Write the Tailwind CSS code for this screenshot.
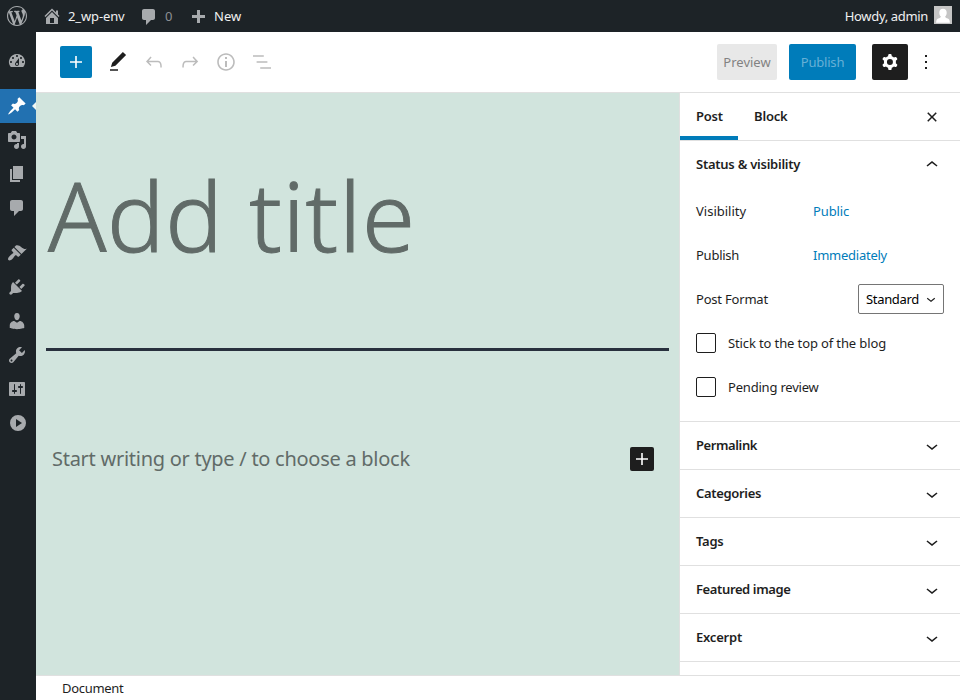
<!DOCTYPE html>
<html lang="en">
<head>
<meta charset="utf-8">
<title>Add New Post</title>
<script src="https://cdn.jsdelivr.net/npm/@tailwindcss/browser@4"></script>
</head>
<body class="w-[960px] h-[700px] overflow-hidden flex flex-col bg-white font-['Noto_Sans','Open_Sans',sans-serif] text-[13px] leading-5 text-[#1e1e1e]">

<!-- Admin bar -->
<header class="h-8 shrink-0 flex items-center bg-[#1d2327] text-[#f0f0f1] pl-[7px] pr-2">
  <svg class="size-5 fill-[#a7aaad]" viewBox="0 0 20 20"><path d="M20 10c0-5.51-4.49-10-10-10C4.48 0 0 4.49 0 10c0 5.52 4.48 10 10 10 5.51 0 10-4.48 10-10zM7.78 15.37L4.37 6.22c.55-.02 1.17-.08 1.17-.08.5-.06.44-1.13-.06-1.11 0 0-1.45.11-2.37.11-.18 0-.37 0-.58-.01C4.12 2.69 6.87 1.11 10 1.11c2.33 0 4.45.87 6.05 2.34-.68-.11-1.65.39-1.65 1.58 0 .74.45 1.36.9 2.1.35.61.55 1.36.55 2.46 0 1.49-1.4 5-1.4 5l-3.03-8.37c.54-.02.82-.17.82-.17.5-.05.44-1.25-.06-1.22 0 0-1.44.12-2.38.12-.87 0-2.33-.12-2.33-.12-.5-.03-.56 1.2-.06 1.22l.92.08 1.26 3.41zM17.41 10c.24-.64.74-1.87.43-4.25.7 1.29 1.05 2.71 1.05 4.25 0 3.29-1.73 6.24-4.4 7.78.97-2.59 1.94-5.2 2.92-7.78zM6.1 18.09C3.12 16.65 1.11 13.53 1.11 10c0-1.3.23-2.48.72-3.59C3.25 10.3 4.67 14.2 6.1 18.09zm4.03-6.63l2.58 6.98c-.86.29-1.76.45-2.71.45-.79 0-1.57-.11-2.29-.33.81-2.38 1.62-4.74 2.42-7.1z"/></svg>
  <svg class="size-5 ml-[15px] fill-[#a7aaad]" viewBox="0 0 20 20"><path d="M16 8.5l1.53 1.53-1.06 1.06L10 4.6l-6.47 6.49-1.06-1.06L10 2.5l4 4v-2h2v4zm-6-2.46l6 5.99V18H4v-5.97zM12 17v-5H8v5h4z"/></svg>
  <span class="ml-1.5 w-[71px] tracking-[-0.13px]">2_wp-env</span>
  <svg class="size-5 mt-0.5 fill-[#a7aaad]" viewBox="0 0 20 20"><path d="M5 2h9c1.1 0 2 .9 2 2v7c0 1.1-.9 2-2 2h-2l-5 5v-5H5c-1.1 0-2-.9-2-2V4c0-1.1.9-2 2-2z"/></svg>
  <span class="ml-[6px] w-[22px] text-[#8c8f94]">0</span>
  <svg class="size-5 mt-[3px] ml-px fill-[#a7aaad]" viewBox="0 0 20 20"><path d="M17 7v3h-5v5H9v-5H4V7h5V2h3v5h5z"/></svg>
  <span class="ml-[6px]">New</span>
  <span class="ml-auto tracking-[-0.34px]">Howdy, admin</span>
  <svg class="ml-1.5 w-[18px] h-[18px] -mt-0.5" viewBox="0 0 18 18"><path fill="#c5c5c5" d="M0 0h18v18H0z"/><path fill="#fff" d="M9 2.8c2.3 0 3.7 1.5 3.7 3.9 0 1.9-.7 3.1-1.6 3.9.2 1.2 1.300 1.500 2.700 2 1.300.5 1.900 1.300 2.100 4.200H2.100c.2-2.900.8-3.700 2.100-4.200 1.400-.5 2.500-.8 2.700-2-.9-.8-1.600-2-1.600-3.900C5.300 4.300 6.700 2.800 9 2.800z"/></svg>
</header>

<div class="flex flex-1 min-h-0">
  <!-- Admin menu -->
  <nav class="w-9 shrink-0 bg-[#1d2327] pt-3 flex flex-col fill-[#a7aaad]">
    <a class="h-[34px] mb-[11px] flex items-center pl-[7px]"><svg class="size-5" viewBox="0 0 20 20"><path fill-rule="evenodd" d="M3.760 16h12.480A7.998 7.998 0 0 0 10 3a7.998 7.998 0 0 0-6.240 13zM10 4c.55 0 1 .45 1 1s-.45 1-1 1-1-.45-1-1 .45-1 1-1zM6 6c.55 0 1 .45 1 1s-.45 1-1 1-1-.45-1-1 .45-1 1-1zm8 0c.55 0 1 .45 1 1s-.45 1-1 1-1-.45-1-1 .45-1 1-1zm-5.370 5.550L12 7v6c0 1.100-.9 2-2 2s-2-.9-2-2c0-.57.24-1.080.63-1.450zM4 10c.55 0 1 .45 1 1s-.45 1-1 1-1-.45-1-1 .45-1 1-1zm12 0c.55 0 1 .45 1 1s-.45 1-1 1-1-.45-1-1 .45-1 1-1zm-5 3c0-.55-.45-1-1-1s-1 .45-1 1 .45 1 1 1 1-.45 1-1z"/></svg></a>
    <a class="h-[34px] flex items-center pl-[7px] bg-[#2271b1] fill-white relative"><svg class="size-5" viewBox="0 0 20 20"><path d="M10.440 3.020l1.820-1.820 6.360 6.350-1.830 1.820c-1.050-.68-2.480-.57-3.410.36l-.75.75c-.92.93-1.040 2.350-.35 3.410l-1.830 1.820-2.410-2.410-2.800 2.790c-.42.42-3.380 2.710-3.800 2.290s1.860-3.390 2.280-3.810l2.790-2.790L4.100 9.360l1.830-1.820c1.050.69 2.480.57 3.400-.36l.75-.75c.93-.92 1.050-2.350.36-3.410z"/></svg>
      <svg class="absolute right-0 top-[13px] w-1 h-2 fill-[#f0f6f3]" viewBox="0 0 4 8"><path d="M4 0v8L0 4z"/></svg></a>
    <a class="h-[34px] flex items-center pl-[7px]"><svg class="size-5" viewBox="0 0 20 20"><path d="M13 11V4c0-.55-.45-1-1-1h-1.670L9 1H5L3.670 3H2c-.55 0-1 .45-1 1v7c0 .55.45 1 1 1h10c.55 0 1-.45 1-1zM7 4.500c1.380 0 2.500 1.120 2.500 2.500S8.380 9.500 7 9.500 4.500 8.380 4.500 7 5.620 4.500 7 4.500zM14 6h5v10.500c0 1.380-1.120 2.500-2.500 2.500S14 17.880 14 16.500s1.120-2.500 2.500-2.500c.17 0 .34.02.5.05V9h-3V6zm-4 8.050V13h2v3.500c0 1.380-1.120 2.500-2.500 2.500S7 17.880 7 16.500 8.120 14 9.500 14c.17 0 .34.02.5.05z"/></svg></a>
    <a class="h-[34px] flex items-center pl-[7px]"><svg class="size-5" viewBox="0 0 20 20"><path d="M6 15V2h10v13H6zm-1 1h8v2H3V5h2v11z"/></svg></a>
    <a class="h-[34px] mb-[11px] flex items-center pl-[7px]"><svg class="size-5" viewBox="0 0 20 20"><path d="M5 2h9c1.100 0 2 .9 2 2v7c0 1.100-.9 2-2 2h-2l-5 5v-5H5c-1.100 0-2-.9-2-2V4c0-1.100.9-2 2-2z"/></svg></a>
    <a class="h-[34px] flex items-center pl-[7px]"><svg class="size-5" viewBox="0 0 20 20"><path d="M14.480 11.060L7.410 3.990l1.500-1.500c.5-.56 2.300-.47 3.510.32 1.210.8 1.430 1.280 2.910 2.100 1.180.64 2.450 1.260 4.450.85zm-.71.71L6.700 4.700 4.930 6.470c-.39.39-.39 1.020 0 1.410l1.060 1.060c.39.39.39 1.030 0 1.420-.6.6-1.430 1.110-2.210 1.690-.35.26-.7.53-1.010.84C1.430 14.230.4 16.080 1.400 17.070c.99 1 2.840-.03 4.180-1.360.31-.31.58-.66.85-1.020.57-.78 1.080-1.610 1.690-2.210.39-.39 1.020-.39 1.410 0l1.060 1.060c.39.39 1.020.39 1.410 0z"/></svg></a>
    <a class="h-[34px] flex items-center pl-[7px]"><svg class="size-5" viewBox="0 0 20 20"><path d="M13.110 4.360L9.870 7.600 8 5.730l3.240-3.240c.35-.34 1.050-.2 1.560.32.52.51.66 1.210.31 1.550zm-8 1.770l.91-1.120 9.010 9.010-1.190.84c-.71.71-2.630 1.160-3.820 1.160H6.140L4.900 17.260c-.59.59-1.540.59-2.120 0-.59-.58-.59-1.530 0-2.120l1.240-1.240v-3.880c0-1.130.4-3.190 1.090-3.890zm7.260 3.970l3.240-3.240c.34-.35 1.040-.21 1.550.31.52.51.66 1.210.31 1.550l-3.240 3.250z"/></svg></a>
    <a class="h-[34px] flex items-center pl-[7px]"><svg class="size-5" viewBox="0 0 20 20"><path d="M10 9.250c-2.270 0-2.730-3.440-2.730-3.440C7 4.020 7.820 2 9.970 2c2.160 0 2.980 2.020 2.710 3.810 0 0-.41 3.440-2.680 3.440zm0 2.570L12.720 10c2.390 0 4.520 2.330 4.520 4.530v2.490s-3.650 1.130-7.240 1.130c-3.650 0-7.240-1.130-7.240-1.130v-2.490c0-2.250 1.940-4.480 4.470-4.480z"/></svg></a>
    <a class="h-[34px] flex items-center pl-[7px]"><svg class="size-5" viewBox="0 0 20 20"><path d="M16.680 9.770c-1.340 1.340-3.300 1.670-4.950.99l-5.410 6.520c-.99.99-2.590.99-3.580 0s-.99-2.590 0-3.570l6.520-5.420c-.68-1.650-.35-3.610.99-4.950 1.280-1.280 3.120-1.620 4.720-1.060l-2.890 2.890 2.820 2.820 2.860-2.870c.53 1.580.18 3.390-1.080 4.650zM3.810 16.210c.4.39 1.040.39 1.430 0 .4-.4.4-1.040 0-1.430-.39-.4-1.030-.4-1.430 0-.39.39-.39 1.030 0 1.430z"/></svg></a>
    <a class="h-[34px] flex items-center pl-[7px]"><svg class="size-5" viewBox="0 0 20 20"><path d="M18 16V4c0-.55-.45-1-1-1H3c-.55 0-1 .45-1 1v12c0 .55.45 1 1 1h14c.55 0 1-.45 1-1zM8 11h1c.55 0 1 .45 1 1s-.45 1-1 1H8v1.500c0 .28-.22.5-.5.5s-.5-.22-.5-.5V13H6c-.55 0-1-.45-1-1s.45-1 1-1h1V5.500c0-.28.22-.5.5-.5s.5.22.5.5V11zm5-2h-1c-.55 0-1-.45-1-1s.45-1 1-1h1V5.500c0-.28.22-.5.5-.5s.5.22.5.5V7h1c.55 0 1 .45 1 1s-.45 1-1 1h-1v5.500c0 .28-.22.5-.5.5s-.5-.22-.5-.5V9z"/></svg></a>
    <a class="h-[34px] flex items-center pl-2"><svg class="size-5" viewBox="0 0 20 20"><path fill-rule="evenodd" d="M10 2a8 8 0 1 0 0 16 8 8 0 0 0 0-16zM8 6v8l6-4z"/></svg></a>
  </nav>

  <div class="flex-1 min-w-0 flex flex-col">
    <!-- Editor toolbar -->
    <div class="h-[61px] shrink-0 border-b border-[#e0e0e0] flex items-center pl-6 pr-[22px]">
      <button class="size-8 rounded-[2px] bg-[#007cba] flex items-center justify-center"><svg class="size-6 fill-white" viewBox="0 0 24 24"><path d="M18 11.200h-5.200V6h-1.600v5.200H6v1.600h5.200V18h1.600v-5.200H18z"/></svg></button>
      <div class="ml-3.5 flex gap-3">
        <svg class="size-6 fill-[#1e1e1e]" viewBox="0 0 24 24"><path d="M20.100 5.100L16.900 2 6.200 12.700l-1.300 4.400 4.500-1.300L20.100 5.100zM4 20.800h8v-1.500H4v1.500z"/></svg>
        <svg class="size-6 fill-[#bcbcbc]" viewBox="0 0 24 24"><path d="M18.300 11.700c-.6-.6-1.400-.9-2.300-.9H6.700l2.900-3.300-1.100-1-4.500 5L8.500 16l1-1-2.700-2.700H16c.5 0 .9.2 1.300.5 1 1 1 3.400 1 4.500v.3h1.500v-.2c0-1.500 0-4.300-1.500-5.700z"/></svg>
        <svg class="size-6 fill-[#bcbcbc]" viewBox="0 0 24 24"><path d="M15.600 6.500l-1.100 1 2.900 3.300H8c-.9 0-1.700.3-2.300.9-1.400 1.500-1.400 4.200-1.400 5.600v.2h1.500v-.3c0-1.100 0-3.500 1-4.500.3-.3.7-.5 1.300-.5h9.200L14.500 15l1.100 1.100 4.600-4.600-4.600-5z"/></svg>
        <svg class="size-6 fill-[#bcbcbc]" viewBox="0 0 24 24"><path d="M12 3.200c-4.800 0-8.800 3.900-8.800 8.800 0 4.800 3.900 8.800 8.800 8.800 4.800 0 8.800-3.900 8.800-8.800 0-4.800-4-8.800-8.800-8.800zm0 16c-4 0-7.200-3.300-7.200-7.200C4.800 8 8 4.800 12 4.800s7.200 3.300 7.200 7.200c0 4-3.200 7.200-7.200 7.200zM11 17h2v-6h-2v6zm0-8h2V7h-2v2z"/></svg>
        <svg class="size-6 fill-[#bcbcbc]" viewBox="0 0 24 24"><path d="M13.800 5.200H3v1.500h10.800V5.200zm-3.600 12v1.500H21v-1.500H10.200zm7.200-6H6.600v1.500h10.800v-1.500z"/></svg>
      </div>
      <button class="ml-auto w-[60px] h-9 rounded-[2px] bg-[#e8e8e8] text-[#828282]">Preview</button>
      <button class="ml-3 w-[67px] h-9 rounded-[2px] bg-[#007cba] text-[#66b0d6] tracking-[-0.2px]">Publish</button>
      <button class="ml-4 size-9 rounded-[2px] bg-[#1e1e1e] flex items-center justify-center"><svg class="size-6 fill-white" viewBox="0 0 24 24"><path fill-rule="evenodd" d="M10.289 4.836A1 1 0 0111.275 4h1.306a1 1 0 01.987.836l.244 1.466c.787.26 1.503.679 2.108 1.218l1.393-.522a1 1 0 011.216.437l.653 1.130a1 1 0 01-.23 1.273l-1.148.944a6.025 6.025 0 010 2.435l1.149.946a1 1 0 01.23 1.272l-.653 1.130a1 1 0 01-1.216.437l-1.394-.522c-.605.54-1.320.958-2.108 1.218l-.244 1.466a1 1 0 01-.987.836h-1.306a1 1 0 01-.986-.836l-.244-1.466a5.995 5.995 0 01-2.108-1.218l-1.394.522a1 1 0 01-1.217-.436l-.653-1.131a1 1 0 01.23-1.272l1.149-.946a6.026 6.026 0 010-2.435l-1.148-.944a1 1 0 01-.23-1.272l.653-1.131a1 1 0 011.217-.437l1.393.522a5.994 5.994 0 012.108-1.218l.244-1.466zM14.929 12a3 3 0 11-6 0 3 3 0 016 0z"/></svg></button>
      <svg class="ml-1.5 size-6 fill-[#1e1e1e]" viewBox="0 0 24 24"><path d="M13 19h-2v-2h2v2zm0-6h-2v-2h2v2zm0-6h-2V5h2v2z"/></svg>
    </div>

    <div class="flex flex-1 min-h-0">
      <!-- Canvas -->
      <main class="flex-1 min-w-0 bg-[#d1e4dd] pl-2.5 pr-2.5 text-[#616b68]">
        <div class="h-[258px] pt-[59px] border-b-[3px] border-[#28303d] text-[96px] leading-[125px] font-light [-webkit-text-stroke:1px_#616b68] tracking-[0.7px] pl-[2px] whitespace-nowrap">Add title</div>
        <div class="mt-[94px] pl-1.5 pr-[15px] flex items-center justify-between h-7">
          <span class="text-[20px] leading-7 tracking-[-0.27px]">Start writing or type / to choose a block</span>
          <span class="size-6 rounded-[2px] bg-[#1e1e1e] flex items-center justify-center"><svg class="size-6 fill-white" viewBox="0 0 24 24"><path d="M18 11.200h-5.200V6h-1.600v5.200H6v1.600h5.200V18h1.600v-5.200H18z"/></svg></span>
        </div>
      </main>

      <!-- Settings sidebar -->
      <aside class="w-[281px] shrink-0 border-l border-[#e0e0e0] overflow-hidden fill-[#1e1e1e]">
        <div class="h-12 border-b border-[#e0e0e0] flex items-stretch font-semibold pr-4">
          <div class="w-[58px] pl-4 leading-[47px] shadow-[inset_0_-4px_0_0_#007cba] tracking-[-0.2px]">Post</div>
          <div class="pl-4 leading-[47px] tracking-[-0.18px]">Block</div>
          <svg class="ml-auto size-6 self-center" viewBox="0 0 24 24"><path d="M12 13.060l3.712 3.713 1.061-1.060L13.061 12l3.712-3.712-1.060-1.060L12 10.938 8.288 7.227l-1.061 1.060L10.939 12l-3.712 3.712 1.060 1.061L12 13.061z"/></svg>
        </div>
        <section class="h-[281px] border-b border-[#e0e0e0] px-4">
          <h2 class="h-12 flex items-center justify-between font-semibold"><span class="pb-0.5 tracking-[-0.25px]">Status &amp; visibility</span><svg class="size-6" viewBox="0 0 24 24"><path d="M6.500 12.400L12 8l5.500 4.400-.9 1.200L12 10l-4.500 3.600-1-1.200z"/></svg></h2>
          <div class="h-11 flex items-center"><span class="w-[117px]">Visibility</span><a class="text-[#007cba] tracking-[-0.13px]">Public</a></div>
          <div class="h-11 flex items-center"><span class="w-[117px] tracking-[-0.25px]">Publish</span><a class="text-[#007cba] tracking-[-0.25px]">Immediately</a></div>
          <div class="h-11 flex items-center justify-between"><span class="tracking-[-0.2px]">Post Format</span>
            <div class="w-[86px] h-[30px] border border-[#757575] rounded-[2px] pl-[7px] pr-[3px] flex items-center justify-between text-black tracking-[-0.33px]">Standard<svg class="size-[18px]" viewBox="0 0 24 24"><path d="M17.500 11.600L12 16l-5.500-4.400.9-1.200L12 14l4.500-3.600 1 1.200z"/></svg></div>
          </div>
          <div class="h-11 flex items-center gap-3"><span class="size-5 border border-[#1e1e1e] rounded-[2px]"></span><span class="tracking-[-0.12px]">Stick to the top of the blog</span></div>
          <div class="h-11 flex items-center gap-3"><span class="size-5 border border-[#1e1e1e] rounded-[2px]"></span><span class="tracking-[-0.2px]">Pending review</span></div>
        </section>
        <h2 class="h-12 border-b border-[#e0e0e0] px-4 flex items-center justify-between font-semibold"><span class="pb-0.5 tracking-[-0.4px]">Permalink</span><svg class="size-6" viewBox="0 0 24 24"><path d="M17.500 11.600L12 16l-5.500-4.400.9-1.200L12 14l4.500-3.600 1 1.200z"/></svg></h2>
        <h2 class="h-12 border-b border-[#e0e0e0] px-4 flex items-center justify-between font-semibold"><span class="pb-0.5 tracking-[-0.32px]">Categories</span><svg class="size-6" viewBox="0 0 24 24"><path d="M17.500 11.600L12 16l-5.500-4.400.9-1.200L12 14l4.500-3.600 1 1.200z"/></svg></h2>
        <h2 class="h-12 border-b border-[#e0e0e0] px-4 flex items-center justify-between font-semibold"><span class="pb-0.5 tracking-[-0.25px]">Tags</span><svg class="size-6" viewBox="0 0 24 24"><path d="M17.500 11.600L12 16l-5.500-4.400.9-1.200L12 14l4.500-3.600 1 1.200z"/></svg></h2>
        <h2 class="h-12 border-b border-[#e0e0e0] px-4 flex items-center justify-between font-semibold"><span class="pb-0.5 tracking-[-0.38px]">Featured image</span><svg class="size-6" viewBox="0 0 24 24"><path d="M17.500 11.600L12 16l-5.500-4.400.9-1.200L12 14l4.500-3.600 1 1.200z"/></svg></h2>
        <h2 class="h-12 border-b border-[#e0e0e0] px-4 flex items-center justify-between font-semibold"><span class="pb-0.5 tracking-[-0.2px]">Excerpt</span><svg class="size-6" viewBox="0 0 24 24"><path d="M17.500 11.600L12 16l-5.500-4.400.9-1.200L12 14l4.500-3.600 1 1.200z"/></svg></h2>
      </aside>
    </div>

    <!-- Breadcrumb -->
    <footer class="h-[25px] shrink-0 border-t border-[#e0e0e0] pl-[26px] flex items-center tracking-[-0.3px]">Document</footer>
  </div>
</div>
</body>
</html>
